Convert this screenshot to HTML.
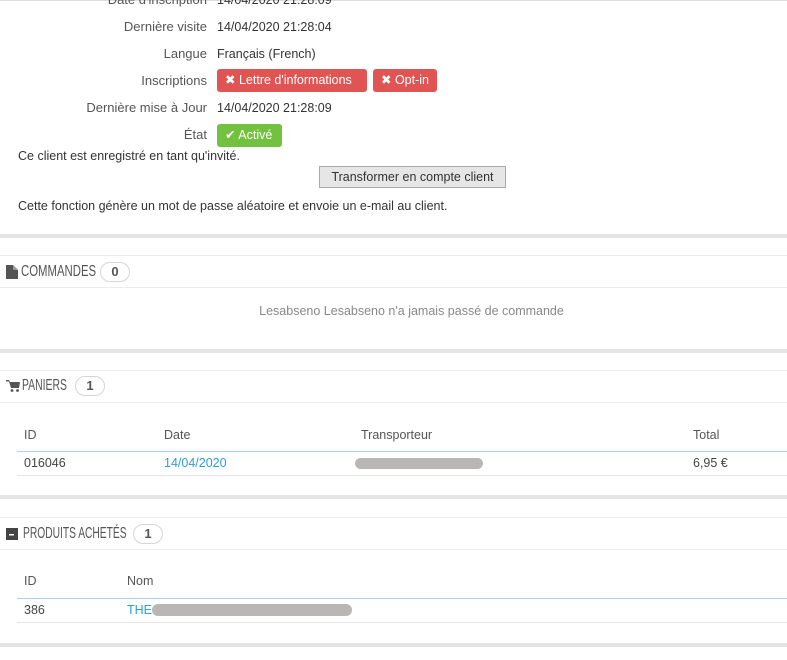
<!DOCTYPE html>
<html><head><meta charset="utf-8"><style>
*{margin:0;padding:0;box-sizing:border-box}
body{width:787px;height:660px;background:#fff;font-family:"Liberation Sans",sans-serif;font-size:12.5px;color:#555;position:relative;overflow:hidden}
.a{position:absolute;white-space:nowrap}
.lbl{position:absolute;right:580px;white-space:nowrap;line-height:16px;font-size:13px}
.val{position:absolute;left:217px;white-space:nowrap;line-height:16px;color:#333}
.btn{position:absolute;color:#fff;border-radius:3px;line-height:23px;padding:0 8px;font-size:12.5px}
.red{background:#e05553}
.bar{position:absolute;left:0;width:787px;height:4px;background:#e4e4e4}
.bt{position:absolute;left:0;width:787px;height:1px;background:#ececec}
.ic{position:absolute;left:6px}
.ht{position:absolute;font-size:16px;color:#555;line-height:18px;transform-origin:left center;white-space:nowrap}
.badge{position:absolute;border:1px solid #d5d5d5;border-radius:11px;width:30px;height:20px;text-align:center;line-height:18px;font-weight:bold;font-size:13px;color:#555}
.th{position:absolute;color:#555;line-height:16px}
.blue{color:#2aa0d6}
.blur{position:absolute;background:#b9b6b6;border-radius:6px}
</style></head><body>
<div class="bt" style="top:0;background:#ddd"></div>
<div class="lbl" style="top:-8px">Date d'inscription</div><div class="val" style="top:-8px">14/04/2020 21:28:09</div>
<div class="lbl" style="top:19px">Dernière visite</div><div class="val" style="top:19px">14/04/2020 21:28:04</div>
<div class="lbl" style="top:46px">Langue</div><div class="val" style="top:46px">Français (French)</div>
<div class="lbl" style="top:73px">Inscriptions</div>
<div class="btn red" style="left:217px;top:69px;width:150px">✖ Lettre d'informations</div>
<div class="btn red" style="left:373px;top:69px;width:64px">✖ Opt-in</div>
<div class="lbl" style="top:100px">Dernière mise à Jour</div><div class="val" style="top:100px">14/04/2020 21:28:09</div>
<div class="lbl" style="top:127px">État</div>
<div class="btn" style="left:217px;top:124px;width:65px;background:#72c13f">✔ Activé</div>
<div class="a" style="left:18px;top:149px;color:#333">Ce client est enregistré en tant qu'invité.</div>
<div class="a" style="left:319px;top:166px;width:187px;height:22px;background:#e6e6e6;border:1px solid #aaa;text-align:center;line-height:20px;color:#333">Transformer en compte client</div>
<div class="a" style="left:18px;top:199px;color:#333">Cette fonction génère un mot de passe aléatoire et envoie un e-mail au client.</div>

<div class="bar" style="top:234px"></div>
<div class="bt" style="top:255px"></div>
<svg class="ic" style="top:265px" width="12" height="14" viewBox="0 0 12 14"><path d="M0 0h7l5 5v9H0z" fill="#555"/><path d="M7 0v5h5z" fill="#999"/></svg>
<div class="ht" style="left:21px;top:263px;transform:scaleX(0.71)">COMMANDES</div>
<div class="badge" style="left:100px;top:262px">0</div>
<div class="bt" style="top:287px"></div>
<div class="a" style="left:0;width:823px;text-align:center;top:304px;color:#888">Lesabseno Lesabseno n'a jamais passé de commande</div>

<div class="bar" style="top:349px"></div>
<div class="bt" style="top:370px"></div>
<svg class="ic" style="top:380px" width="14" height="12" viewBox="0 0 14 12"><path d="M0 0h3l1 2h10l-1 6H5L3 1.5H0z" fill="#555"/><circle cx="6" cy="10.5" r="1.4" fill="#555"/><circle cx="11.5" cy="10.5" r="1.4" fill="#555"/></svg>
<div class="ht" style="left:22px;top:377px;transform:scaleX(0.65)">PANIERS</div>
<div class="badge" style="left:75px;top:376px">1</div>
<div class="bt" style="top:402px"></div>
<div class="th" style="left:24px;top:427px">ID</div>
<div class="th" style="left:164px;top:427px">Date</div>
<div class="th" style="left:361px;top:427px">Transporteur</div>
<div class="th" style="left:693px;top:427px">Total</div>
<div class="a" style="left:17px;top:451px;width:770px;height:1px;background:#a9d4e6"></div>
<div class="th" style="left:24px;top:455px;color:#444">016046</div>
<div class="th blue" style="left:164px;top:455px">14/04/2020</div>
<div class="blur" style="left:355px;top:458px;width:128px;height:11px"></div>
<div class="th" style="left:693px;top:455px;color:#444">6,95 €</div>
<div class="a" style="left:17px;top:475px;width:770px;height:1px;background:#e6e6e6"></div>

<div class="bar" style="top:495px"></div>
<div class="bt" style="top:517px"></div>
<svg class="ic" style="top:528px" width="12" height="12" viewBox="0 0 12 12"><rect width="12" height="12" fill="#444"/><rect x="3" y="6" width="5" height="1.5" fill="#fff"/></svg>
<div class="ht" style="left:23px;top:525px;transform:scaleX(0.64)">PRODUITS ACHETÉS</div>
<div class="badge" style="left:133px;top:524px">1</div>
<div class="bt" style="top:549px"></div>
<div class="th" style="left:24px;top:573px">ID</div>
<div class="th" style="left:127px;top:573px">Nom</div>
<div class="a" style="left:17px;top:598px;width:770px;height:1px;background:#a9d4e6"></div>
<div class="th" style="left:24px;top:602px;color:#444">386</div>
<div class="th blue" style="left:127px;top:602px">THE</div>
<div class="blur" style="left:152px;top:604px;width:200px;height:12px"></div>
<div class="a" style="left:17px;top:622px;width:770px;height:1px;background:#e6e6e6"></div>
<div class="bar" style="top:643px"></div>
</body></html>
